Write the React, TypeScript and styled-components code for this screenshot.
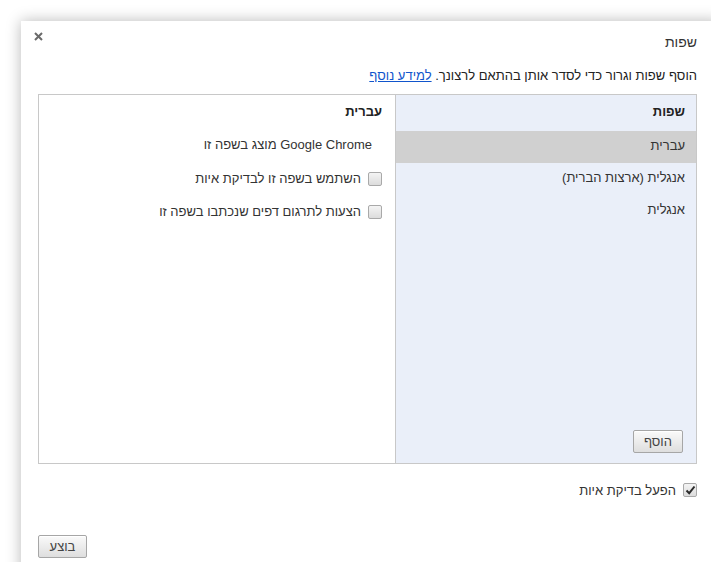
import React, { useState } from 'react';
import styled, { createGlobalStyle } from 'styled-components';

const GlobalStyle = createGlobalStyle`
    html, body {
        margin: 0;
        padding: 0;
        background: #ffffff;
    }

    body {
        font-family: "Liberation Sans", "DejaVu Sans", Arial, sans-serif;
        font-size: 13px;
        color: #222;
    }
`;

const Page = styled.div`
    width: 711px;
    height: 562px;
    overflow: hidden;
    padding: 21px 0 0 21px;
    box-sizing: border-box;
`;

const Dialog = styled.div`
    direction: rtl;
    width: 700px;
    height: 560px;
    background: #fff;
    box-shadow: 0 0 14px rgba(0, 0, 0, 0.28);
    padding: 0 24px 0 17px;
    box-sizing: border-box;
    display: flex;
    flex-direction: column;
`;

const Header = styled.div`
    display: flex;
    justify-content: space-between;
    align-items: flex-start;
    height: 44px;
`;

const Title = styled.h1`
    margin: 0;
    padding-top: 13px;
    font-size: 14px;
    font-weight: normal;
    line-height: 16px;
    color: #333;
`;

const CloseButton = styled.button`
    margin: 8px 0 0 -7px;
    padding: 0;
    width: 14px;
    height: 14px;
    border: none;
    background: none;
    display: flex;
    align-items: center;
    justify-content: center;
    cursor: pointer;
`;

const Intro = styled.p`
    margin: 0;
    padding-top: 2px;
    height: 27px;
    line-height: 18px;
    color: #222;
`;

const Link = styled.a`
    color: #1155cc;
    text-decoration: underline;
`;

const Panel = styled.div`
    display: flex;
    height: 370px;
    border: 1px solid #c8c8c8;
    box-sizing: border-box;
`;

const LanguageColumn = styled.div`
    width: 300px;
    background: #eaeff9;
    border-left: 1px solid #c8c8c8;
    display: flex;
    flex-direction: column;
`;

const ColumnHeader = styled.div<{ $inset: number }>`
    height: 36px;
    line-height: 34px;
    padding-right: ${p => p.$inset}px;
    font-weight: bold;
    color: #222;
`;

const LanguageRow = styled.div<{ $selected?: boolean }>`
    height: 32px;
    line-height: 30px;
    padding-right: 11px;
    background: ${p => (p.$selected ? '#d0d0d0' : 'transparent')};
    color: #333;
    cursor: default;
`;

const ColumnFooter = styled.div`
    margin-top: auto;
    padding: 0 13px 10px 0;
    display: flex;
`;

const Button = styled.button`
    height: 23px;
    min-width: 49px;
    padding: 0 10px;
    border: 1px solid #a6a6a6;
    border-radius: 2px;
    background: linear-gradient(#fafafa, #dedede);
    box-shadow: inset 0 1px 0 #fff;
    font: inherit;
    font-size: 13px;
    color: #444;
    cursor: pointer;
`;

const DetailColumn = styled.div`
    flex: 1;
    display: flex;
    flex-direction: column;
`;

const DetailText = styled.div`
    height: 31px;
    line-height: 28px;
    padding-right: 23px;
    color: #333;
`;

const CheckRow = styled.label<{ $inset: number; $height: number }>`
    display: flex;
    align-items: center;
    gap: 7px;
    height: ${p => p.$height}px;
    padding-right: ${p => p.$inset}px;
    color: #333;
    cursor: default;
`;

const Box = styled.span<{ $checked: boolean }>`
    width: 12px;
    height: 12px;
    border: 1px solid #a9a9a9;
    border-radius: 2px;
    background: linear-gradient(#f4f4f4, #dcdcdc);
    display: flex;
    align-items: center;
    justify-content: center;
    flex-shrink: 0;
`;

const Footer = styled.div`
    margin-top: 19px;
    display: flex;
    justify-content: flex-end;
`;

function Checkbox({ checked, onToggle }: { checked: boolean; onToggle: () => void }) {
    return (
        <Box $checked={checked} onClick={onToggle}>
            {checked && (
                <svg width='11' height='10' viewBox='0 0 11 10'>
                    <path d='M1.5 5.5 L4.2 8.2 L9.5 1.5' fill='none' stroke='#2b2b2b' strokeWidth='2' />
                </svg>
            )}
        </Box>
    );
}

const LANGUAGES = ['עברית', 'אנגלית (ארצות הברית)', 'אנגלית'];

export default function App(): React.JSX.Element {
    const [selected, setSelected] = useState(0);
    const [spellThis, setSpellThis] = useState(false);
    const [translate, setTranslate] = useState(false);
    const [spellCheck, setSpellCheck] = useState(true);

    return <>
        <GlobalStyle />
        <Page>
            <Dialog>
                <Header>
                    <Title>שפות</Title>
                    <CloseButton title='סגור'>
                        <svg width='9' height='9' viewBox='0 0 9 9'>
                            <path d='M1 1 L8 8 M8 1 L1 8' stroke='#6a6a6a' strokeWidth='2' />
                        </svg>
                    </CloseButton>
                </Header>
                <Intro>
                    הוסף שפות וגרור כדי לסדר אותן בהתאם לרצונך. <Link href='#'>למידע נוסף</Link>
                </Intro>
                <Panel>
                    <LanguageColumn>
                        <ColumnHeader $inset={11}>שפות</ColumnHeader>
                        {LANGUAGES.map((name, i) =>
                            <LanguageRow
                                key={`language-${i}`}
                                $selected={i === selected}
                                onClick={() => setSelected(i)}
                            >
                                {name}
                            </LanguageRow>
                        )}
                        <ColumnFooter>
                            <Button>הוסף</Button>
                        </ColumnFooter>
                    </LanguageColumn>
                    <DetailColumn>
                        <ColumnHeader $inset={13}>{LANGUAGES[selected]}</ColumnHeader>
                        <DetailText>Google Chrome מוצג בשפה זו</DetailText>
                        <CheckRow $inset={13} $height={33}>
                            <Checkbox checked={spellThis} onToggle={() => setSpellThis(!spellThis)} />
                            השתמש בשפה זו לבדיקת איות
                        </CheckRow>
                        <CheckRow $inset={13} $height={33}>
                            <Checkbox checked={translate} onToggle={() => setTranslate(!translate)} />
                            הצעות לתרגום דפים שנכתבו בשפה זו
                        </CheckRow>
                    </DetailColumn>
                </Panel>
                <CheckRow $inset={0} $height={52}>
                    <Checkbox checked={spellCheck} onToggle={() => setSpellCheck(!spellCheck)} />
                    הפעל בדיקת איות
                </CheckRow>
                <Footer>
                    <Button>בוצע</Button>
                </Footer>
            </Dialog>
        </Page>
    </>;
}
